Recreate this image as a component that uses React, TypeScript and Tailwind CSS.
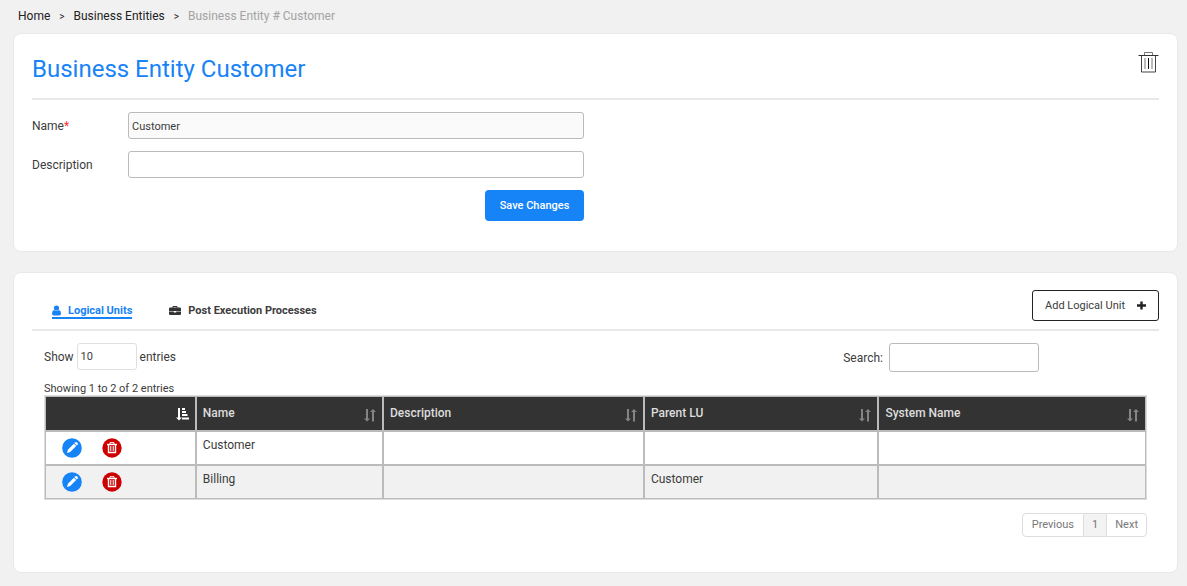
import { useState, type FormEvent } from "react";

type LogicalUnit = {
    name: string;
    description: string;
    parent: string;
    system: string;
};

const units: LogicalUnit[] = [
    { name: "Customer", description: "", parent: "", system: "" },
    { name: "Billing", description: "", parent: "Customer", system: "" },
];

const columns = [
    { label: "Name", width: "w-[17%]" },
    { label: "Description", width: "w-[23.7%]" },
    { label: "Parent LU", width: "w-[21.3%]" },
    { label: "System Name", width: "w-[24.3%]" },
];

export default function App() {
    return (
        <div className="min-h-screen bg-[#f1f1f1] pr-[9px] pb-3 pl-[13px] font-['Roboto',sans-serif] text-xs text-[#3c3c3c]">
            <Breadcrumb />
            <EntityForm />
            <LogicalUnits />
        </div>
    );
}

function Breadcrumb() {
    return (
        <nav aria-label="Breadcrumb" className="flex h-[33px] items-center pb-px pl-[5px] text-[#222]">
            <a href="#home">Home</a>
            <span className="px-[9px] pt-px text-[10px]">&gt;</span>
            <a href="#entities">Business Entities</a>
            <span className="px-[9px] pt-px text-[10px]">&gt;</span>
            <span className="text-[#a3a3a3]">Business Entity # Customer</span>
        </nav>
    );
}

function EntityForm() {
    const [description, setDescription] = useState("");

    function onSubmit(e: FormEvent<HTMLFormElement>) {
        e.preventDefault();
    }

    return (
        <section className="rounded-lg border border-[#e9e9e9] bg-white px-[18px] pb-[30px]">
            <div className="flex h-[66px] items-start justify-between border-b-2 border-[#e8e8e8] pt-[17px]">
                <h1 className="text-2xl leading-9 text-[#1683f7]">Business Entity Customer</h1>
                <button type="button" aria-label="Delete business entity">
                    <TrashOutline />
                </button>
            </div>

            <form onSubmit={onSubmit} className="mt-3 flex max-w-[552px] flex-col gap-3">
                <div className="flex items-center">
                    <label htmlFor="name" className="w-24 shrink-0">
                        Name<span className="text-red-500">*</span>
                    </label>
                    <input
                        id="name"
                        className="h-[27px] min-w-0 grow rounded-[3px] border border-[#bbb] bg-[#fafafa] px-[3px] pt-0.5 text-[11px]"
                        value="Customer"
                        readOnly
                    />
                </div>
                <div className="flex items-center">
                    <label htmlFor="description" className="w-24 shrink-0">
                        Description
                    </label>
                    <input
                        id="description"
                        className="h-[27px] min-w-0 grow rounded-[3px] border border-[#bbb] px-[3px] pt-0.5 text-[11px]"
                        value={description}
                        onChange={(e) => setDescription(e.target.value)}
                    />
                </div>
                <button
                    type="submit"
                    className="h-[31px] min-w-[99px] self-end rounded-sm bg-[#1683f7] px-3 pt-0.5 text-[11px] font-medium text-white"
                >
                    Save Changes
                </button>
            </form>
        </section>
    );
}

function LogicalUnits() {
    const [search, setSearch] = useState("");

    return (
        <section className="mt-5 rounded-lg border border-[#e9e9e9] bg-white px-[18px] pb-[35px]">
            <div className="flex h-[58px] items-start justify-between border-b-2 border-[#e8e8e8] pt-[17px]">
                <div className="flex gap-[37px] pt-[13px] pl-5 text-[11px] leading-4 font-bold">
                    <a href="#units" className="flex h-4 items-center border-b-2 border-[#1683f7] text-[#1683f7]">
                        <UserIcon />
                        <span className="pt-0.5 pl-[7px]">Logical Units</span>
                    </a>
                    <a href="#processes" className="flex h-3.5 items-center">
                        <BriefcaseIcon />
                        <span className="pt-0.5 pl-[7px]">Post Execution Processes</span>
                    </a>
                </div>
                <button
                    type="button"
                    className="flex h-[31px] items-center rounded-[3px] border border-[#222] px-3 text-[11px]"
                >
                    <span className="pt-0.5">Add Logical Unit</span>
                    <PlusIcon />
                </button>
            </div>

            <div className="mr-3 ml-3">
                <div className="mt-3 flex items-start justify-between">
                    <label className="flex items-center gap-[3px]">
                        Show
                        <select
                            className="h-[27px] w-[60px] appearance-none rounded-[3px] border border-[#e0e0e0] px-[3px] pt-0.5 text-[11px]"
                            defaultValue="10"
                        >
                            <option>10</option>
                            <option>25</option>
                            <option>50</option>
                        </select>
                        entries
                    </label>
                    <label className="mr-[108px] flex items-center gap-1.5">
                        Search:
                        <input
                            type="search"
                            className="h-[29px] w-[150px] rounded-[3px] border border-[#bbb] px-1 text-[11px]"
                            value={search}
                            onChange={(e) => setSearch(e.target.value)}
                        />
                    </label>
                </div>

                <p className="mt-[11px] text-[11px] leading-3">Showing 1 to 2 of 2 entries</p>
                <UnitsTable />

                <nav aria-label="Pagination" className="mt-[13px] flex justify-end text-[11px] text-[#777]">
                    <button type="button" className="h-6 rounded-l-sm border border-[#ddd] px-[9px]">
                        Previous
                    </button>
                    <button type="button" className="h-6 border-y border-[#ddd] bg-[#f3f3f3] px-2">
                        1
                    </button>
                    <button type="button" className="h-6 rounded-r-sm border border-[#ddd] px-2">
                        Next
                    </button>
                </nav>
            </div>
        </section>
    );
}

function UnitsTable() {
    return (
        <table className="w-full table-fixed border-separate border-spacing-0 border border-[#ddd] text-left">
            <thead className="bg-[#333] text-[#ddd]">
                <tr className="h-[35px]">
                    <th className="w-[13.7%] border border-[#bbb] px-1.5">
                        <div className="flex justify-end pt-0.5 text-white">
                            <SortedIcon />
                        </div>
                    </th>
                    {columns.map((col) => (
                        <th key={col.label} className={`${col.width} border border-[#bbb] px-1.5 font-medium`}>
                            <div className="flex items-start justify-between">
                                <span>{col.label}</span>
                                <span className="pt-1 text-[#858585]">
                                    <SortIcon />
                                </span>
                            </div>
                        </th>
                    ))}
                </tr>
            </thead>
            <tbody>
                {units.map((unit) => (
                    <tr key={unit.name} className="h-[34px] align-top leading-4 even:bg-[#f1f1f1]">
                        <td className="border border-[#bbb] pt-1.5 pl-4">
                            <div className="flex gap-5">
                                <button type="button" aria-label={`Edit ${unit.name}`}>
                                    <EditIcon />
                                </button>
                                <button type="button" aria-label={`Delete ${unit.name}`}>
                                    <DeleteIcon />
                                </button>
                            </div>
                        </td>
                        <td className="border border-[#bbb] px-1.5 pt-[5px]">{unit.name}</td>
                        <td className="border border-[#bbb] px-1.5 pt-[5px]">{unit.description}</td>
                        <td className="border border-[#bbb] px-1.5 pt-[5px]">{unit.parent}</td>
                        <td className="border border-[#bbb] px-1.5 pt-[5px]">{unit.system}</td>
                    </tr>
                ))}
            </tbody>
        </table>
    );
}

function UserIcon() {
    return (
        <svg width="9" height="11" viewBox="0 0 9 11" fill="currentColor">
            <circle cx="4.5" cy="3" r="2.6" />
            <path d="M2 5q2.500 2 5 0 2 .8 2 3.500 0 2-1.800 2H1.800Q0 10.500 0 8.500 0 5.800 2 5z" />
        </svg>
    );
}

function BriefcaseIcon() {
    return (
        <svg width="12" height="11" viewBox="0 0 12 11">
            <path d="M4 3V1.500h4V3" fill="none" stroke="#333" />
            <path d="M1 2.500h10q1 0 1 1V6H0V3.500q0-1 1-1z" fill="#333" />
            <path d="M0 6.500h4.800v1h2.400v-1H12V9q0 1-1 1H1q-1 0-1-1z" fill="#333" />
        </svg>
    );
}

function PlusIcon() {
    return (
        <svg className="ml-3" width="9" height="9" viewBox="0 0 9 9" fill="#222">
            <path d="M3.300 0.500h2.400v2.800H9v2.400H5.700v2.800H3.300V5.700H0V3.300h3.300z" />
        </svg>
    );
}

function TrashOutline() {
    return (
        <svg width="21" height="22" viewBox="0 0 21 22" fill="none" stroke="#444">
            <path d="M0.500 4.500h20" stroke="#333" />
            <path d="M6.500 4V1.500h8V4" stroke="#777" />
            <path d="M3.500 5v16h14V5" />
            <path d="M7 7v11M14 7v11" stroke="#777" />
            <path d="M10.500 7v11" stroke="#111" />
        </svg>
    );
}

function SortedIcon() {
    return (
        <svg width="13" height="13" viewBox="0 0 13 13" fill="currentColor">
            <path d="M2 0h2v9.500h2l-3 3-3-3h2z" />
            <path d="M6 0h3v2H6zM6 3h4v2H6zM6 6h5.500v2H6zM6 9.500h7v2H6z" />
        </svg>
    );
}

function SortIcon() {
    return (
        <svg width="12" height="13" viewBox="0 0 12 13" fill="currentColor">
            <path d="M2 0h2v9.500h2l-3 3-3-3h2z" />
            <path d="M8 12.500h2V3h2L9 0 6 3h2z" />
        </svg>
    );
}

function EditIcon() {
    return (
        <svg width="20" height="20" viewBox="0 0 20 20">
            <circle cx="10" cy="10" r="9.800" fill="#1683f7" />
            <path d="M5 15l.9-3.200 6-6 2.300 2.300-6 6z" fill="#fff" />
            <path d="M12.500 5.200l1-1q.5-.4 1 0l1.300 1.300q.4.500 0 1l-1 1z" fill="#fff" />
        </svg>
    );
}

function DeleteIcon() {
    return (
        <svg width="20" height="20" viewBox="0 0 20 20" fill="none" stroke="#fff">
            <circle cx="10" cy="10" r="9.700" fill="#c00" stroke="none" />
            <path d="M5 6.500h10" strokeWidth="1.400" />
            <path d="M8 6V4.700h4V6" />
            <path d="M6.500 7v7.500h7V7" strokeWidth="1.400" />
            <path d="M8.800 8v5M11.200 8v5" />
        </svg>
    );
}
